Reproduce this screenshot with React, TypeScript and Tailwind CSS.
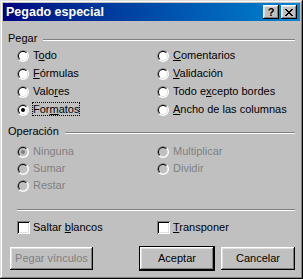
import type { ReactNode } from 'react';

const BEVEL =
  'shadow-[inset_-1px_-1px_#000,inset_1px_1px_#fff,inset_-2px_-2px_#808080,inset_2px_2px_#dfdfdf]';

function Radio({ checked, disabled }: { checked?: boolean; disabled?: boolean }) {
  return (
    <svg width="12" height="12" viewBox="0 0 12 12" className="shrink-0">
      <defs>
        <clipPath id="radio-tl">
          <polygon points="0,0 12,0 0,12" />
        </clipPath>
      </defs>
      <circle cx="6" cy="6" r="6" fill="#fff" />
      <circle cx="6" cy="6" r="6" fill="#808080" clipPath="url(#radio-tl)" />
      <circle cx="6" cy="6" r="5" fill="#dfdfdf" />
      <circle cx="6" cy="6" r="5" fill="#000" clipPath="url(#radio-tl)" />
      <circle cx="6" cy="6" r="4" fill={disabled ? '#c0c0c0' : '#fff'} />
      {checked && <circle cx="6" cy="6" r="2" fill={disabled ? '#808080' : '#000'} />}
    </svg>
  );
}

function Option({
  children,
  checked,
  disabled,
}: {
  children: ReactNode;
  checked?: boolean;
  disabled?: boolean;
}) {
  return (
    <div className={`flex h-[13px] items-center gap-[4px] ${disabled ? 'text-[#808080]' : 'text-black'}`}>
      <Radio checked={checked} disabled={disabled} />
      <span className="whitespace-nowrap">{children}</span>
    </div>
  );
}

function GroupHeader({ label }: { label: string }) {
  return (
    <div className="flex h-[13px]">
      <span className="whitespace-nowrap">{label}</span>
      <div className="ml-[6px] mt-[7px] h-[2px] flex-1 border-t border-b border-t-[#808080] border-b-white" />
    </div>
  );
}

function Check({ children }: { children: ReactNode }) {
  return (
    <div className="flex h-[13px] items-center gap-[3px]">
      <div className="h-[13px] w-[13px] shrink-0 bg-white shadow-[inset_1px_1px_#808080,inset_-1px_-1px_#fff,inset_2px_2px_#000,inset_-2px_-2px_#dfdfdf]" />
      <span className="whitespace-nowrap">{children}</span>
    </div>
  );
}

function Btn({ children, w, disabled, primary }: { children: ReactNode; w: string; disabled?: boolean; primary?: boolean }) {
  return (
    <div
      className={`flex h-[23px] items-center justify-center bg-[#c0c0c0] ${w} ${BEVEL} ${
        primary ? 'outline-1 outline-black' : ''
      } ${disabled ? 'text-[#808080]' : 'text-black'}`}
    >
      {children}
    </div>
  );
}

export default function App() {
  return (
    <div className="h-[279px] w-[303px] bg-[#c0c0c0] p-[3px] font-['Liberation_Sans',Arial,sans-serif] text-[11px] leading-[13px] text-black shadow-[inset_-1px_-1px_#000,inset_1px_1px_#dfdfdf,inset_-2px_-2px_#808080,inset_2px_2px_#fff]">
      {/* title bar */}
      <div className="flex h-[18px] items-center bg-linear-to-r from-[#000080] to-[#1084d0] pl-[3px] pr-[3px]">
        <span className="flex-1 whitespace-nowrap text-[12.5px] font-bold text-white">Pegado especial</span>
        <div className={`flex h-[14px] w-[16px] items-center justify-center bg-[#c0c0c0] ${BEVEL}`}>
          <span className="text-[11px] leading-[11px] font-bold">?</span>
        </div>
        <div className={`ml-[2px] flex h-[14px] w-[16px] items-center justify-center bg-[#c0c0c0] ${BEVEL}`}>
          <svg width="8" height="7" viewBox="0 0 8 7">
            <path d="M0 0h2v1h1v1h2V1h1V0h2v1H7v1H6v1H5v1h1v1h1v1h1v1H6V6H5V5H3v1H2v1H0V6h1V5h1V4h1V3H2V2H1V1H0z" fill="#000" />
          </svg>
        </div>
      </div>

      <div className="px-[5px]">
        <div className="mt-[11px]">
          <GroupHeader label="Pegar" />
        </div>
        <div className="ml-[9px] mt-[4px] grid grid-cols-[140px_1fr] gap-y-[5px]">
          <Option>T<u>o</u>do</Option>
          <Option><u>C</u>omentarios</Option>
          <Option><u>F</u>órmulas</Option>
          <Option><u>V</u>alidación</Option>
          <Option>Valo<u>r</u>es</Option>
          <Option>Todo e<u>x</u>cepto bordes</Option>
          <Option checked>
            <span className="outline-1 outline-dotted outline-black">For<u>m</u>atos</span>
          </Option>
          <Option><u>A</u>ncho de las columnas</Option>
        </div>

        <div className="mt-[9px]">
          <GroupHeader label="Operación" />
        </div>
        <div className="ml-[9px] mt-[7px] grid grid-cols-[140px_1fr] gap-y-[4px]">
          <Option checked disabled>Ninguna</Option>
          <Option disabled>Multiplicar</Option>
          <Option disabled>Sumar</Option>
          <Option disabled>Dividir</Option>
          <Option disabled>Restar</Option>
          <div />
        </div>

        <div className="ml-[9px] mt-[17px] h-[2px] border-t border-b border-t-[#808080] border-b-white" />

        <div className="ml-[9px] mt-[10px] grid grid-cols-[140px_1fr]">
          <Check>Saltar <u>b</u>lancos</Check>
          <Check><u>T</u>ransponer</Check>
        </div>

        <div className="mt-[13px] flex">
          <div className="ml-[2px]">
            <Btn w="w-[83px]" disabled>Pegar vínculos</Btn>
          </div>
          <div className="ml-auto flex gap-[7px]">
            <Btn w="w-[74px]" primary>Aceptar</Btn>
            <Btn w="w-[74px]">Cancelar</Btn>
          </div>
        </div>
      </div>
    </div>
  );
}
